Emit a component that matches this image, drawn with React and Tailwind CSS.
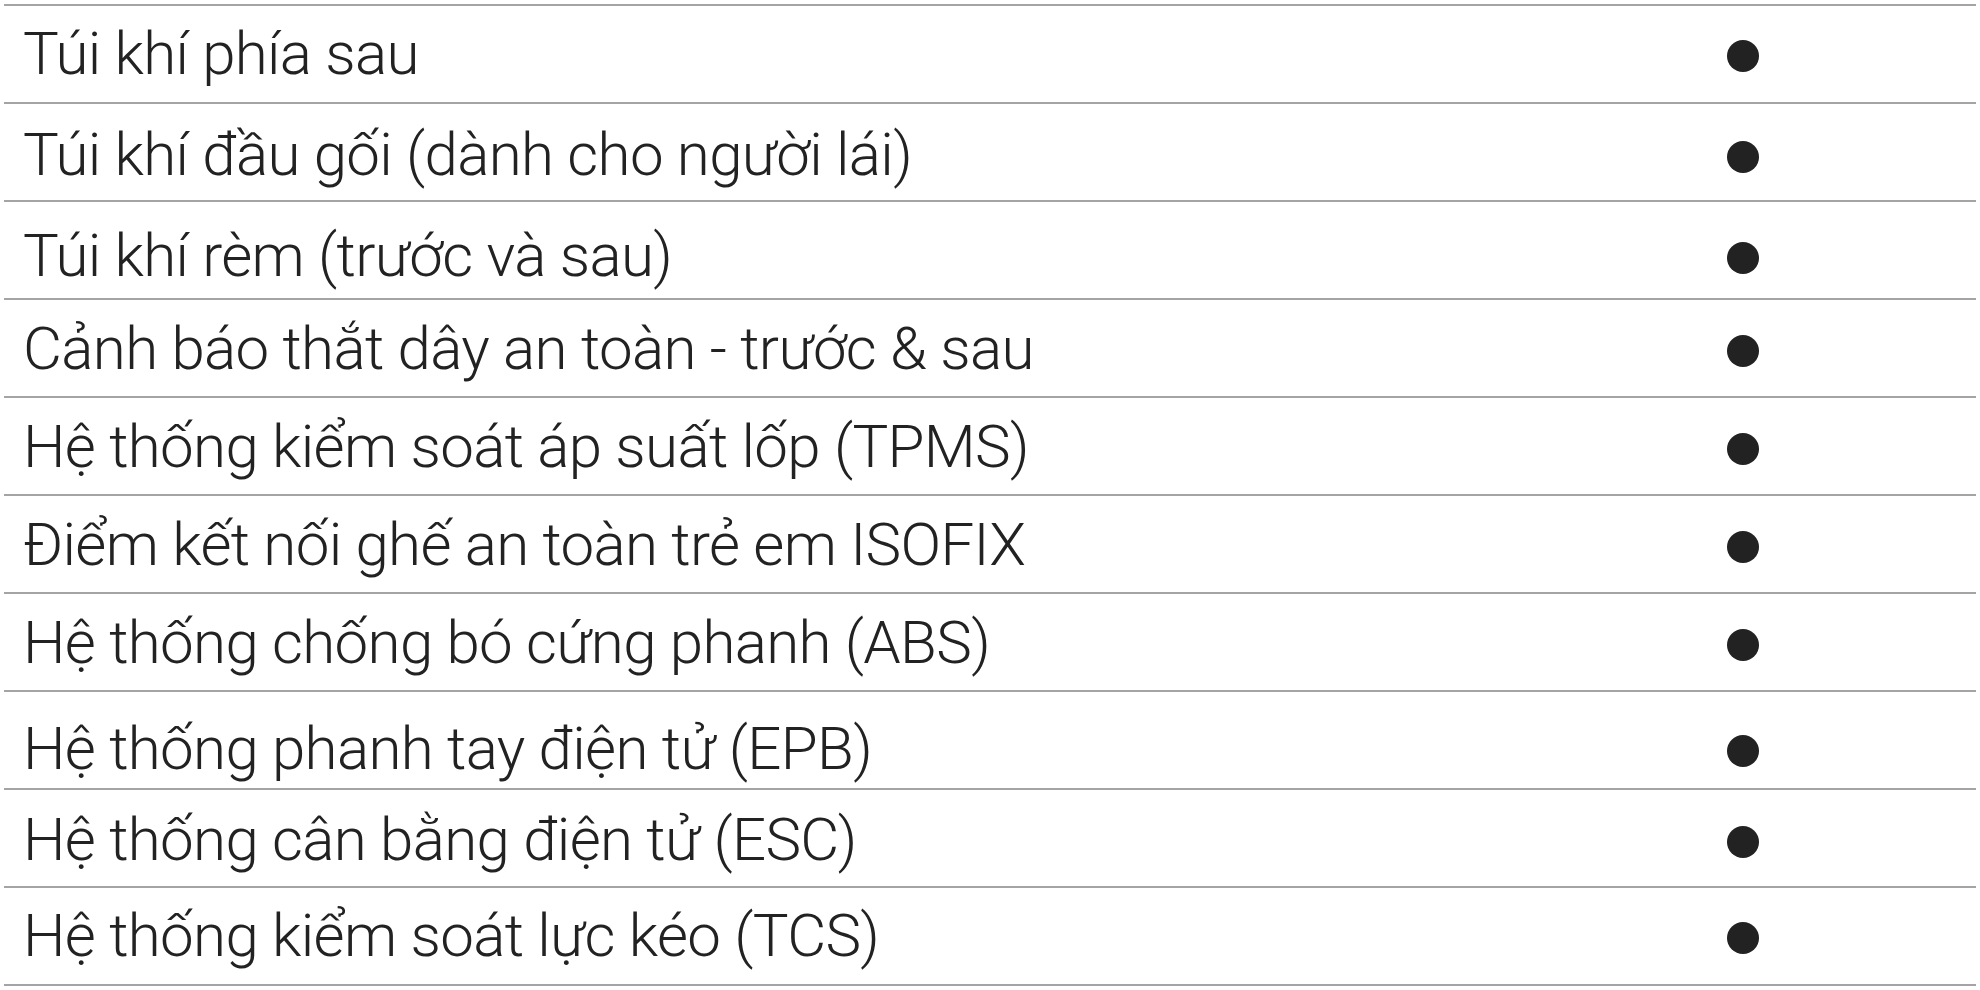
export default function App() {
  const rows = [
    { t: "Túi khí phía sau", pad: "pt-0" },
    { t: "Túi khí đầu gối (dành cho người lái)", pad: "pt-[5px]" },
    { t: "Túi khí rèm (trước và sau)", pad: "pt-[12px]" },
    { t: "Cảnh báo thắt dây an toàn - trước & sau", pad: "pt-[2px]" },
    { t: "Hệ thống kiểm soát áp suất lốp (TPMS)", pad: "pt-[1px]" },
    { t: "Điểm kết nối ghế an toàn trẻ em ISOFIX", pad: "pt-[2px]" },
    { t: "Hệ thống chống bó cứng phanh (ABS)", pad: "pt-[1px]" },
    { t: "Hệ thống phanh tay điện tử (EPB)", pad: "pt-[18px]" },
    { t: "Hệ thống cân bằng điện tử (ESC)", pad: "pt-[4px]" },
    { t: "Hệ thống kiểm soát lực kéo (TCS)", pad: "pt-0" },
  ];
  return (
    <div className="w-[1980px] h-[990px] bg-white pt-[4px] px-[4px] overflow-hidden" style={{ fontFamily: "Roboto, 'Liberation Sans', sans-serif" }}>
      <div className="flex flex-col border-b-2 border-[#a4a4a4]">
        {rows.map((r) => (
          <div key={r.t} className={"flex items-center h-[98px] border-t-2 border-[#a4a4a4] " + r.pad}>
            <div className="flex-1 pl-[19px] text-[60px] leading-none font-light text-[#222222] tracking-[-0.66px]">{r.t}</div>
            <div className="w-[466px] flex justify-center pt-[4px]">
              <div className="w-8 h-8 rounded-full bg-[#222222]" />
            </div>
          </div>
        ))}
      </div>
    </div>
  );
}
